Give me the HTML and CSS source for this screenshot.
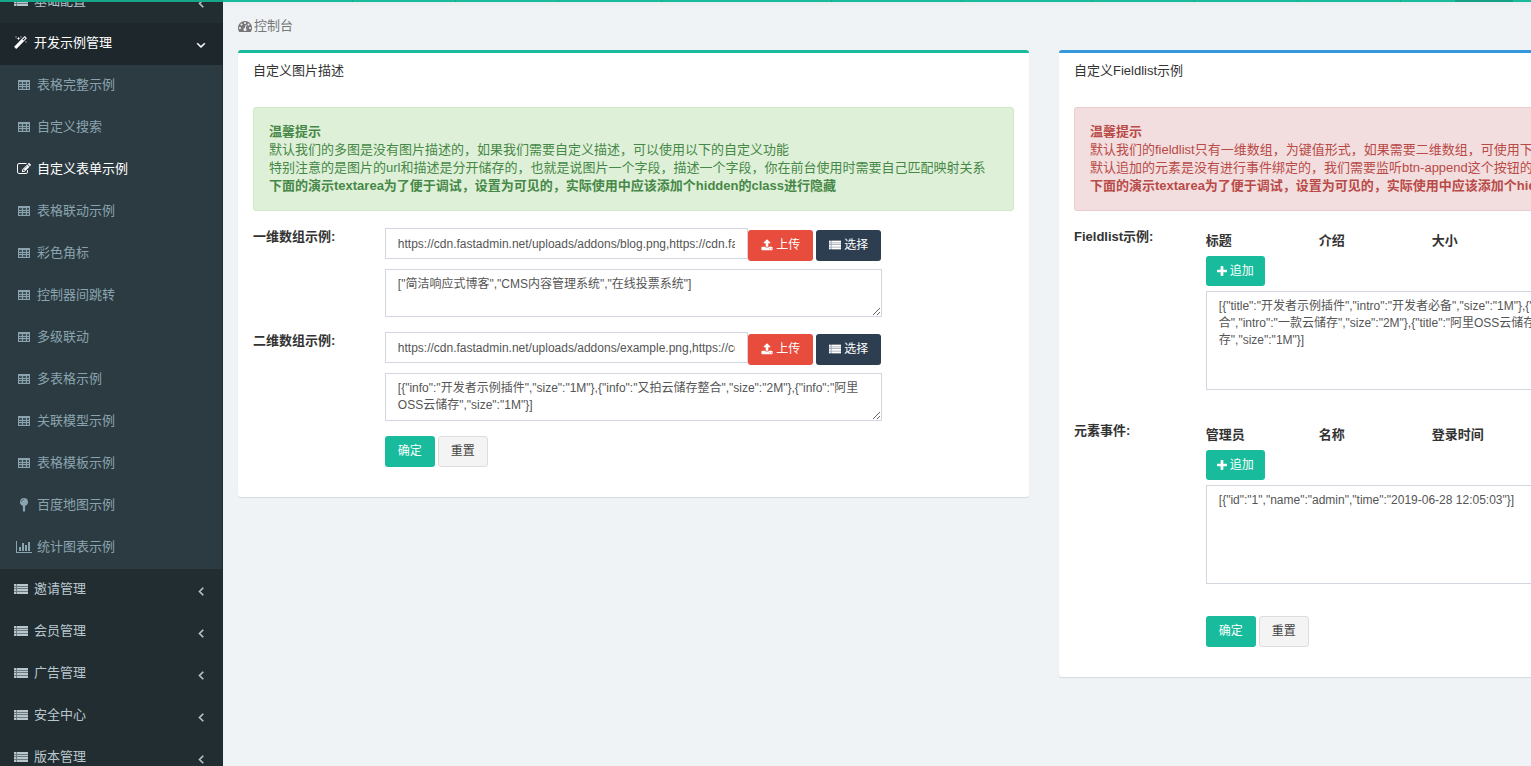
FILE: index.html
```html
<!DOCTYPE html>
<html lang="zh-CN">
<head>
    <meta charset="UTF-8">
    <meta name="viewport" content="width=device-width, initial-scale=1.0">
    <title>控制台</title>
    <link rel="stylesheet" href="styles.css">
</head>
<body>
    <svg class="sprite" aria-hidden="true">
        <symbol id="i-list" viewBox="0 0 14 14"><path d="M0 2h2v2H0zM3 2h11v2H3zM0 5h2v1H0zM3 5h11v1H3zM0 7h2v2H0zM3 7h11v2H3zM0 10h2v2H0zM3 10h11v2H3z"/><path opacity=".5" d="M0 2h14v10H0z"/></symbol>
        <symbol id="i-table" viewBox="0 0 14 14"><path fill-rule="evenodd" d="M1 2h12v10H1zM2 4v2h3V4zM6 4v2h3V4zM10 4v2h2V4zM2 7v1h3V7zM6 7v1h3V7zM10 7v1h2V7zM2 9v2h3V9zM6 9v2h3V9zM10 9v2h2V9z"/><path opacity=".2" d="M1 2h12v10H1z"/></symbol>
        <symbol id="i-bars" viewBox="0 0 2048 1792"><path d="M640 896v512h-256v-512h256zm384-512v1024h-256v-1024h256zm1024 1152v128h-2048v-1536h128v1408h1920zm-640-896v768h-256v-768h256zm384-384v1152h-256v-1152h256z"/></symbol>
        <symbol id="i-pin" viewBox="0 0 1792 1792"><path d="M896 0a512 512 0 0 1 140 1004v660q0 64-64 64h-152q-64 0-64-64V1004a512 512 0 0 1 140-1004zm0 160q-133 0-236 104t-104 226q0 32 32 32t32-32q0-106 85-191t191-85q32 0 32-27t-32-27z"/></symbol>
        <symbol id="i-plus" viewBox="0 0 1408 1408"><path transform="translate(-192 -128)" d="M1600 736v192q0 40-28 68t-68 28h-416v416q0 40-28 68t-68 28h-192q-40 0-68-28t-28-68v-416h-416q-40 0-68-28t-28-68v-192q0-40 28-68t68-28h416v-416q0-40 28-68t68-28h192q40 0 68 28t28 68v416h416q40 0 68 28t28 68z"/></symbol>
        <symbol id="i-upload" viewBox="0 0 1792 1792"><path d="M1344 1472q0-26-19-45t-45-19-45 19-19 45 19 45 45 19 45-19 19-45zm256 0q0-26-19-45t-45-19-45 19-19 45 19 45 45 19 45-19 19-45zm128-224v320q0 40-28 68t-68 28h-1472q-40 0-68-28t-28-68v-320q0-40 28-68t68-28h427q21 56 70.500 92t110.500 36h256q61 0 110.500-36t70.500-92h427q40 0 68 28t28 68zm-325-648q-17 40-59 40h-256v448q0 26-19 45t-45 19h-256q-26 0-45-19t-19-45v-448h-256q-42 0-59-40-17-39 14-69l448-448q18-19 45-19t45 19l448 448q31 30 14 69z"/></symbol>
        <symbol id="i-dashboard" viewBox="0 0 1792 1792"><path d="M384 1152q0-53-37.500-90.500t-90.500-37.500-90.500 37.500-37.500 90.500 37.500 90.500 90.500 37.500 90.500-37.500 37.500-90.500zm192-448q0-53-37.500-90.500t-90.500-37.500-90.500 37.500-37.500 90.500 37.500 90.500 90.500 37.500 90.500-37.500 37.500-90.500zm428 481l101-382q6-26-7.500-48.500t-38.500-29.500-48 6.500-30 39.500l-101 382q-60 5-107 43.500t-63 98.500q-20 77 20 146t117 89 146-20 89-117q16-60-6-117t-72-91zm660-33q0-53-37.500-90.500t-90.500-37.500-90.500 37.500-37.500 90.500 37.500 90.500 90.500 37.500 90.500-37.500 37.500-90.500zm-640-640q0-53-37.500-90.500t-90.500-37.500-90.500 37.500-37.500 90.500 37.500 90.500 90.500 37.500 90.500-37.500 37.500-90.500zm448 192q0-53-37.500-90.500t-90.500-37.500-90.500 37.500-37.500 90.500 37.500 90.500 90.500 37.500 90.500-37.500 37.500-90.500zm320 448q0 261-141 483-19 29-54 29h-1402q-35 0-54-29-141-221-141-483 0-182 71-348t191-286 286-191 348-71 348 71 286 191 191 286 71 348z"/></symbol>
        <symbol id="i-edit" viewBox="0 0 1792 1792"><path d="M888 1184l116-116-152-152-116 116v56h96v96h56zm440-720q-16-16-33 1l-350 350q-17 17-1 33t33-1l350-350q17-17 1-33zm80 594v190q0 119-84.500 203.500t-203.500 84.500h-832q-119 0-203.500-84.500t-84.500-203.500v-832q0-119 84.500-203.500t203.500-84.500h832q63 0 117 25 15 7 18 23 3 17-9 29l-49 49q-14 14-32 8-23-6-45-6h-832q-66 0-113 47t-47 113v832q0 66 47 113t113 47h832q66 0 113-47t47-113v-126q0-13 9-22l64-64q15-15 35-7t20 29zm-96-738l288 288-672 672h-288v-288zm444 132l-92 92-288-288 92-92q28-28 68-28t68 28l152 152q28 28 28 68t-28 68z"/></symbol>
        <symbol id="i-magic" viewBox="0 0 1792 1792"><path d="M1190 581l293-293-107-107-293 293zm447-293q0 27-18 45l-1286 1286q-18 18-45 18t-45-18l-198-198q-18-18-18-45t18-45l1286-1286q18-18 45-18t45 18l198 198q18 18 18 45zm-1351-190l98 30-98 30-30 98-30-98-98-30 98-30 30-98zm350 162l196 60-196 60-60 196-60-196-196-60 196-60 60-196zm930 478l98 30-98 30-30 98-30-98-98-30 98-30 30-98zm-640-640l98 30-98 30-30 98-30-98-98-30 98-30 30-98z"/></symbol>
        <symbol id="i-left" viewBox="0 0 1792 1792"><path d="M1203 544q0 13-10 23l-393 393 393 393q10 10 10 23t-10 23l-50 50q-10 10-23 10t-23-10l-466-466q-10-10-10-23t10-23l466-466q10-10 23-10t23 10l50 50q10 10 10 23z"/></symbol>
        <symbol id="i-down" viewBox="0 0 1792 1792"><path d="M1395 736q0 13-10 23l-466 466q-10 10-23 10t-23-10l-466-466q-10-10-10-23t10-23l50-50q10-10 23-10t23 10l393 393 393-393q10-10 23-10t23 10l50 50q10 10 10 23z"/></symbol>
    </svg>

    <header class="topbar">
        <div class="topbar-logo"></div>
        <div class="topbar-nav">
            <div class="tab tab-wide"></div>
            <div class="tab"></div>
            <div class="tab"></div>
            <div class="tab"></div>
            <div class="tab tab-long"></div>
            <div class="tab tab-wide"></div>
            <div class="tab tab-wide"></div>
            <div class="tab"></div>
            <div class="tab"></div>
            <div class="tab"></div>
        </div>
        <div class="topbar-active"></div>
        <div class="topbar-end"></div>
    </header>

    <div class="wrapper">
        <nav class="sidebar">
            <ul class="menu">
                <li><a href="#"><span class="menu-icon"><svg class="icon"><use href="#i-list"/></svg></span><span>基础配置</span><svg class="icon arrow"><use href="#i-left"/></svg></a></li>
                <li class="open">
                    <a href="#"><span class="menu-icon"><svg class="icon"><use href="#i-magic"/></svg></span><span>开发示例管理</span><svg class="icon arrow"><use href="#i-down"/></svg></a>
                    <ul class="submenu">
                        <li><a href="#"><span class="menu-icon"><svg class="icon"><use href="#i-table"/></svg></span><span>表格完整示例</span></a></li>
                        <li><a href="#"><span class="menu-icon"><svg class="icon"><use href="#i-table"/></svg></span><span>自定义搜索</span></a></li>
                        <li class="active"><a href="#"><span class="menu-icon"><svg class="icon"><use href="#i-edit"/></svg></span><span>自定义表单示例</span></a></li>
                        <li><a href="#"><span class="menu-icon"><svg class="icon"><use href="#i-table"/></svg></span><span>表格联动示例</span></a></li>
                        <li><a href="#"><span class="menu-icon"><svg class="icon"><use href="#i-table"/></svg></span><span>彩色角标</span></a></li>
                        <li><a href="#"><span class="menu-icon"><svg class="icon"><use href="#i-table"/></svg></span><span>控制器间跳转</span></a></li>
                        <li><a href="#"><span class="menu-icon"><svg class="icon"><use href="#i-table"/></svg></span><span>多级联动</span></a></li>
                        <li><a href="#"><span class="menu-icon"><svg class="icon"><use href="#i-table"/></svg></span><span>多表格示例</span></a></li>
                        <li><a href="#"><span class="menu-icon"><svg class="icon"><use href="#i-table"/></svg></span><span>关联模型示例</span></a></li>
                        <li><a href="#"><span class="menu-icon"><svg class="icon"><use href="#i-table"/></svg></span><span>表格模板示例</span></a></li>
                        <li><a href="#"><span class="menu-icon"><svg class="icon"><use href="#i-pin"/></svg></span><span>百度地图示例</span></a></li>
                        <li><a href="#"><span class="menu-icon"><svg class="icon icon-wide"><use href="#i-bars"/></svg></span><span>统计图表示例</span></a></li>
                    </ul>
                </li>
                <li><a href="#"><span class="menu-icon"><svg class="icon"><use href="#i-list"/></svg></span><span>邀请管理</span><svg class="icon arrow"><use href="#i-left"/></svg></a></li>
                <li><a href="#"><span class="menu-icon"><svg class="icon"><use href="#i-list"/></svg></span><span>会员管理</span><svg class="icon arrow"><use href="#i-left"/></svg></a></li>
                <li><a href="#"><span class="menu-icon"><svg class="icon"><use href="#i-list"/></svg></span><span>广告管理</span><svg class="icon arrow"><use href="#i-left"/></svg></a></li>
                <li><a href="#"><span class="menu-icon"><svg class="icon"><use href="#i-list"/></svg></span><span>安全中心</span><svg class="icon arrow"><use href="#i-left"/></svg></a></li>
                <li><a href="#"><span class="menu-icon"><svg class="icon"><use href="#i-list"/></svg></span><span>版本管理</span><svg class="icon arrow"><use href="#i-left"/></svg></a></li>
            </ul>
        </nav>

        <main class="content">
            <div class="breadcrumb"><a href="#"><svg class="icon"><use href="#i-dashboard"/></svg>控制台</a></div>

            <div class="panels">
                <section class="panel panel-success">
                    <div class="panel-heading">自定义图片描述</div>
                    <form class="panel-body">
                        <div class="alert alert-success">
                            <b>温馨提示</b><br>
                            默认我们的多图是没有图片描述的，如果我们需要自定义描述，可以使用以下的自定义功能<br>
                            特别注意的是图片的url和描述是分开储存的，也就是说图片一个字段，描述一个字段，你在前台使用时需要自己匹配映射关系<br>
                            <b>下面的演示textarea为了便于调试，设置为可见的，实际使用中应该添加个hidden的class进行隐藏</b>
                        </div>
                        <div class="row">
                            <label class="row-label" for="images-one">一维数组示例:</label>
                            <div class="row-control">
                                <div class="input-group">
                                    <input class="form-control" id="images-one" type="text" value="https://cdn.fastadmin.net/uploads/addons/blog.png,https://cdn.fastadmin.net/uploads/addons/cms.png">
                                    <button class="btn btn-danger" type="button"><svg class="icon"><use href="#i-upload"/></svg>上传</button>
                                    <button class="btn btn-primary" type="button"><svg class="icon"><use href="#i-list"/></svg>选择</button>
                                </div>
                                <textarea class="form-control" rows="2" aria-label="一维数组描述">["简洁响应式博客","CMS内容管理系统","在线投票系统"]</textarea>
                            </div>
                        </div>
                        <div class="row">
                            <label class="row-label" for="images-two">二维数组示例:</label>
                            <div class="row-control">
                                <div class="input-group">
                                    <input class="form-control" id="images-two" type="text" value="https://cdn.fastadmin.net/uploads/addons/example.png,https://cdn.fastadmin.net/uploads/addons/upyun.png">
                                    <button class="btn btn-danger" type="button"><svg class="icon"><use href="#i-upload"/></svg>上传</button>
                                    <button class="btn btn-primary" type="button"><svg class="icon"><use href="#i-list"/></svg>选择</button>
                                </div>
                                <textarea class="form-control" rows="2" aria-label="二维数组描述">[{"info":"开发者示例插件","size":"1M"},{"info":"又拍云储存整合","size":"2M"},{"info":"阿里OSS云储存","size":"1M"}]</textarea>
                            </div>
                        </div>
                        <div class="row">
                            <div class="row-label"></div>
                            <div class="row-control actions">
                                <button class="btn btn-success" type="submit">确定</button>
                                <button class="btn btn-default" type="reset">重置</button>
                            </div>
                        </div>
                    </form>
                </section>

                <section class="panel panel-info">
                    <div class="panel-heading">自定义Fieldlist示例</div>
                    <form class="panel-body">
                        <div class="alert alert-danger">
                            <b>温馨提示</b><br>
                            默认我们的fieldlist只有一维数组，为键值形式，如果需要二维数组，可使用下面的自定义模板<br>
                            默认追加的元素是没有进行事件绑定的，我们需要监听btn-append这个按钮的事件<br>
                            <b>下面的演示textarea为了便于调试，设置为可见的，实际使用中应该添加个hidden的class进行隐藏</b>
                        </div>
                        <div class="row row-fieldlist">
                            <label class="row-label" for="fieldlist">Fieldlist示例:</label>
                            <div class="row-control">
                                <div class="field-head"><span>标题</span><span>介绍</span><span>大小</span></div>
                                <button class="btn btn-success btn-append" type="button"><svg class="icon"><use href="#i-plus"/></svg>追加</button>
                                <textarea class="form-control" id="fieldlist" rows="5">[{"title":"开发者示例插件","intro":"开发者必备","size":"1M"},{"title":"又拍云储存整合","intro":"一款云储存","size":"2M"},{"title":"阿里OSS云储存","intro":"一款云储存","size":"1M"}]</textarea>
                            </div>
                        </div>
                        <div class="row row-fieldlist">
                            <label class="row-label" for="events">元素事件:</label>
                            <div class="row-control">
                                <div class="field-head"><span>管理员</span><span>名称</span><span>登录时间</span></div>
                                <button class="btn btn-success btn-append" type="button"><svg class="icon"><use href="#i-plus"/></svg>追加</button>
                                <textarea class="form-control" id="events" rows="5">[{"id":"1","name":"admin","time":"2019-06-28 12:05:03"}]</textarea>
                            </div>
                        </div>
                        <div class="row">
                            <div class="row-label"></div>
                            <div class="row-control actions">
                                <button class="btn btn-success" type="submit">确定</button>
                                <button class="btn btn-default" type="reset">重置</button>
                            </div>
                        </div>
                    </form>
                </section>
            </div>
        </main>
    </div>
</body>
</html>
```
FILE: styles.css
```css
* {
    box-sizing: border-box;
}
body {
    margin: 0;
    height: 100vh;
    display: flex;
    flex-direction: column;
    overflow: hidden;
    background: #eff3f6;
    color: #333;
    font-family: "Liberation Sans", "Noto Sans CJK SC", sans-serif;
    font-size: 13px;
    line-height: 18px;
}
a {
    color: inherit;
    text-decoration: none;
}
ul {
    list-style: none;
    margin: 0;
    padding: 0;
}
.sprite {
    display: none;
}
.icon {
    width: 14px;
    height: 14px;
    fill: currentColor;
    flex: none;
}
.icon-wide {
    width: 16px;
}

/* top bar */
.topbar {
    display: flex;
    flex: none;
    height: 2px;
    background: #18bc9c;
}
.topbar-logo {
    width: 223px;
    background: #18a689;
}
.topbar-nav {
    flex: 1;
    display: flex;
}
.tab {
    width: 103px;
    border-right: 1px solid #16a78b;
}
.tab-wide {
    width: 130px;
}
.tab-long {
    width: 170px;
}
.topbar-active {
    width: 58px;
    background: #16a085;
}
.topbar-end {
    width: 18px;
}

.wrapper {
    flex: 1;
    min-height: 0;
    display: flex;
}

/* sidebar */
.sidebar {
    flex: 0 0 223px;
    overflow: hidden;
    background: #222d32;
    color: #b8c7ce;
}
/* the menu is scrolled under the top bar */
.menu {
    margin-top: -21px;
}
.menu a {
    display: flex;
    align-items: center;
    gap: 3px;
    height: 42px;
    padding: 0 15px 2px 11px;
}
.menu-icon {
    flex: 0 0 20px;
    display: flex;
    justify-content: center;
}
.menu .arrow {
    margin: 4px 0 0 auto;
    stroke: currentColor;
    stroke-width: 80px;
}
.open > a {
    background: #1e282c;
    color: #fff;
}
.submenu {
    margin-right: 1px;
    background: #2c3b41;
    color: #8aa4af;
}
.menu .submenu a {
    padding-left: 14px;
}
.submenu .active {
    color: #fff;
}

/* content */
.content {
    flex: 1;
    min-width: 0;
    overflow: hidden;
    padding: 15px;
    box-shadow: inset 0 4px 4px -2px rgba(0, 0, 0, 0.03);
}
.breadcrumb {
    height: 33px;
    color: #777;
}
.breadcrumb a {
    display: flex;
    align-items: center;
    gap: 2px;
}
.panels {
    display: grid;
    grid-template-columns: repeat(2, minmax(791px, 1fr));
    align-items: start;
    gap: 30px;
}
.panel {
    background: #fff;
    border-top: 3px solid;
    border-radius: 3px;
    box-shadow: 0 1px 1px rgba(0, 0, 0, 0.1);
}
.panel-success {
    border-color: #18bc9c;
}
.panel-info {
    border-color: #3498db;
}
.panel-heading {
    padding: 9px 15px 12px;
}
.panel-body {
    padding: 15px 15px 30px;
}
.alert {
    margin-bottom: 17px;
    padding: 15px;
    border: 1px solid;
    border-radius: 3px;
}
.alert-success {
    background: #dff0d8;
    border-color: #cde9c5;
    color: #468847;
}
.alert-danger {
    background: #f2dede;
    border-color: #ebcccc;
    color: #b94a48;
}

/* form */
.row {
    display: flex;
    margin: 0 -15px 15px;
}
.row:last-child {
    margin-bottom: 0;
}
.row-label {
    width: 16.6667%;
    padding: 0 15px;
    font-weight: bold;
}
.row-control {
    width: 66.6667%;
    padding: 0 15px;
}
.input-group {
    display: flex;
    align-items: flex-start;
    margin-bottom: 8px;
}
.input-group .btn {
    margin-top: 2px;
}
.input-group .btn-primary {
    margin: 2px 1px 0 3px;
}
.form-control {
    display: block;
    width: 100%;
    padding: 6px 12px;
    border: 1px solid #d2d6de;
    border-radius: 0;
    background: #fff;
    color: #555;
    font: inherit;
    font-size: 12px;
    line-height: 17px;
}
.input-group .form-control {
    flex: 1;
    min-width: 0;
    height: 31px;
}
.btn {
    display: inline-flex;
    align-items: center;
    justify-content: center;
    gap: 3px;
    height: 31px;
    padding: 0 12px 2px;
    border: 1px solid transparent;
    border-radius: 3px;
    color: #fff;
    font: inherit;
    font-size: 12px;
    white-space: nowrap;
    cursor: pointer;
}
.btn .icon {
    width: 12px;
    height: 12px;
}
.btn-danger {
    background: #e74c3c;
}
.btn-primary {
    background: #2c3e50;
}
.btn-success {
    background: #18bc9c;
}
.btn-default {
    background: #f4f4f4;
    border-color: #ddd;
    color: #444;
}
.actions {
    display: flex;
    gap: 3px;
}
.row-fieldlist {
    margin-bottom: 32px;
}
.field-head {
    display: flex;
    padding: 4px 0 6px;
    font-weight: bold;
}
.field-head span {
    flex: 0 0 113px;
}
.btn-append {
    height: 30px;
    padding: 0 10px;
    margin-bottom: 5px;
}
.btn-append .icon {
    width: 10px;
    height: 10px;
}
```
